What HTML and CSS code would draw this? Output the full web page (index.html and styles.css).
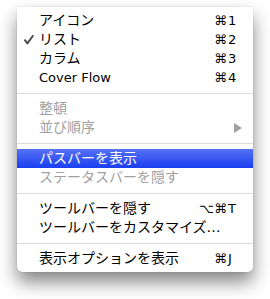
FILE: index.html
```html
<html>
<head>
    <title>表示メニュー</title>
    <meta http-equiv="Content-Type" content="text/html; charset=utf-8"/>
    <link rel="stylesheet" href="styles.css">
</head>
<body>
<div class="menu">
    <div class="item">
        <span class="check"></span>
        <span class="label">アイコン</span>
        <span class="mods">⌘</span><span class="key">1</span>
    </div>
    <div class="item">
        <span class="check">
            <svg width="10" height="10" viewBox="0 0 10 10">
                <path d="M1 5.2 L3.4 8.4 L8.8 1" fill="none" stroke="#4b4b4b" stroke-width="2" stroke-linecap="round" stroke-linejoin="round"/>
            </svg>
        </span>
        <span class="label">リスト</span>
        <span class="mods">⌘</span><span class="key">2</span>
    </div>
    <div class="item">
        <span class="check"></span>
        <span class="label">カラム</span>
        <span class="mods">⌘</span><span class="key">3</span>
    </div>
    <div class="item">
        <span class="check"></span>
        <span class="label latin">Cover Flow</span>
        <span class="mods">⌘</span><span class="key">4</span>
    </div>

    <div class="separator"></div>

    <div class="item disabled">
        <span class="check"></span>
        <span class="label">整頓</span>
    </div>
    <div class="item disabled">
        <span class="check"></span>
        <span class="label">並び順序</span>
        <span class="arrow">
            <svg width="8" height="10" viewBox="0 0 8 10">
                <path d="M0 0 L8 5 L0 10 Z" fill="#a3a3a3"/>
            </svg>
        </span>
    </div>

    <div class="separator"></div>

    <div class="item selected">
        <span class="check"></span>
        <span class="label">パスバーを表示</span>
    </div>
    <div class="item disabled">
        <span class="check"></span>
        <span class="label">ステータスバーを隠す</span>
    </div>

    <div class="separator"></div>

    <div class="item">
        <span class="check"></span>
        <span class="label">ツールバーを隠す</span>
        <span class="mods">⌥⌘</span><span class="key">T</span>
    </div>
    <div class="item">
        <span class="check"></span>
        <span class="label">ツールバーをカスタマイズ…</span>
    </div>

    <div class="separator"></div>

    <div class="item">
        <span class="check"></span>
        <span class="label">表示オプションを表示</span>
        <span class="mods">⌘</span><span class="key">J</span>
    </div>
</div>
</body>
</html>
```

FILE: styles.css
```css
html {
    font-family: "DejaVu Sans", "Noto Sans CJK JP", sans-serif;
    margin: 0;
}

body {
    margin: 0;
    background: white;
    width: 270px;
    height: 299px;
    overflow: hidden;
}

.menu {
    width: 236px;
    margin: 7px 0 0 17px;
    padding: 4px 0;
    background: white;
    border-radius: 0 0 5px 5px;
    box-shadow: 0 10px 18px rgba(0, 0, 0, 0.48), 0 0 1px rgba(0, 0, 0, 0.4);
}

.item {
    display: flex;
    align-items: center;
    height: 19px;
    font-size: 14px;
    line-height: 19px;
    color: black;
}

.check {
    width: 22px;
    display: flex;
    align-items: center;
    padding-left: 7px;
    box-sizing: border-box;
}

.check svg {
    display: block;
}

.label {
    flex: 1;
    white-space: nowrap;
}

.latin,
.mods,
.key {
    font-size: 13px;
}

.mods {
    text-align: right;
}

.key {
    width: 25px;
    padding-left: 1px;
}

.arrow {
    width: 19px;
    display: flex;
    align-items: center;
}

.disabled {
    color: #a0a0a0;
}

.selected {
    color: white;
    background: linear-gradient(#5672f4, #1a3ef1);
}

.separator {
    height: 1px;
    margin: 6px 0 5px;
    background: #dcdcdc;
}
```
